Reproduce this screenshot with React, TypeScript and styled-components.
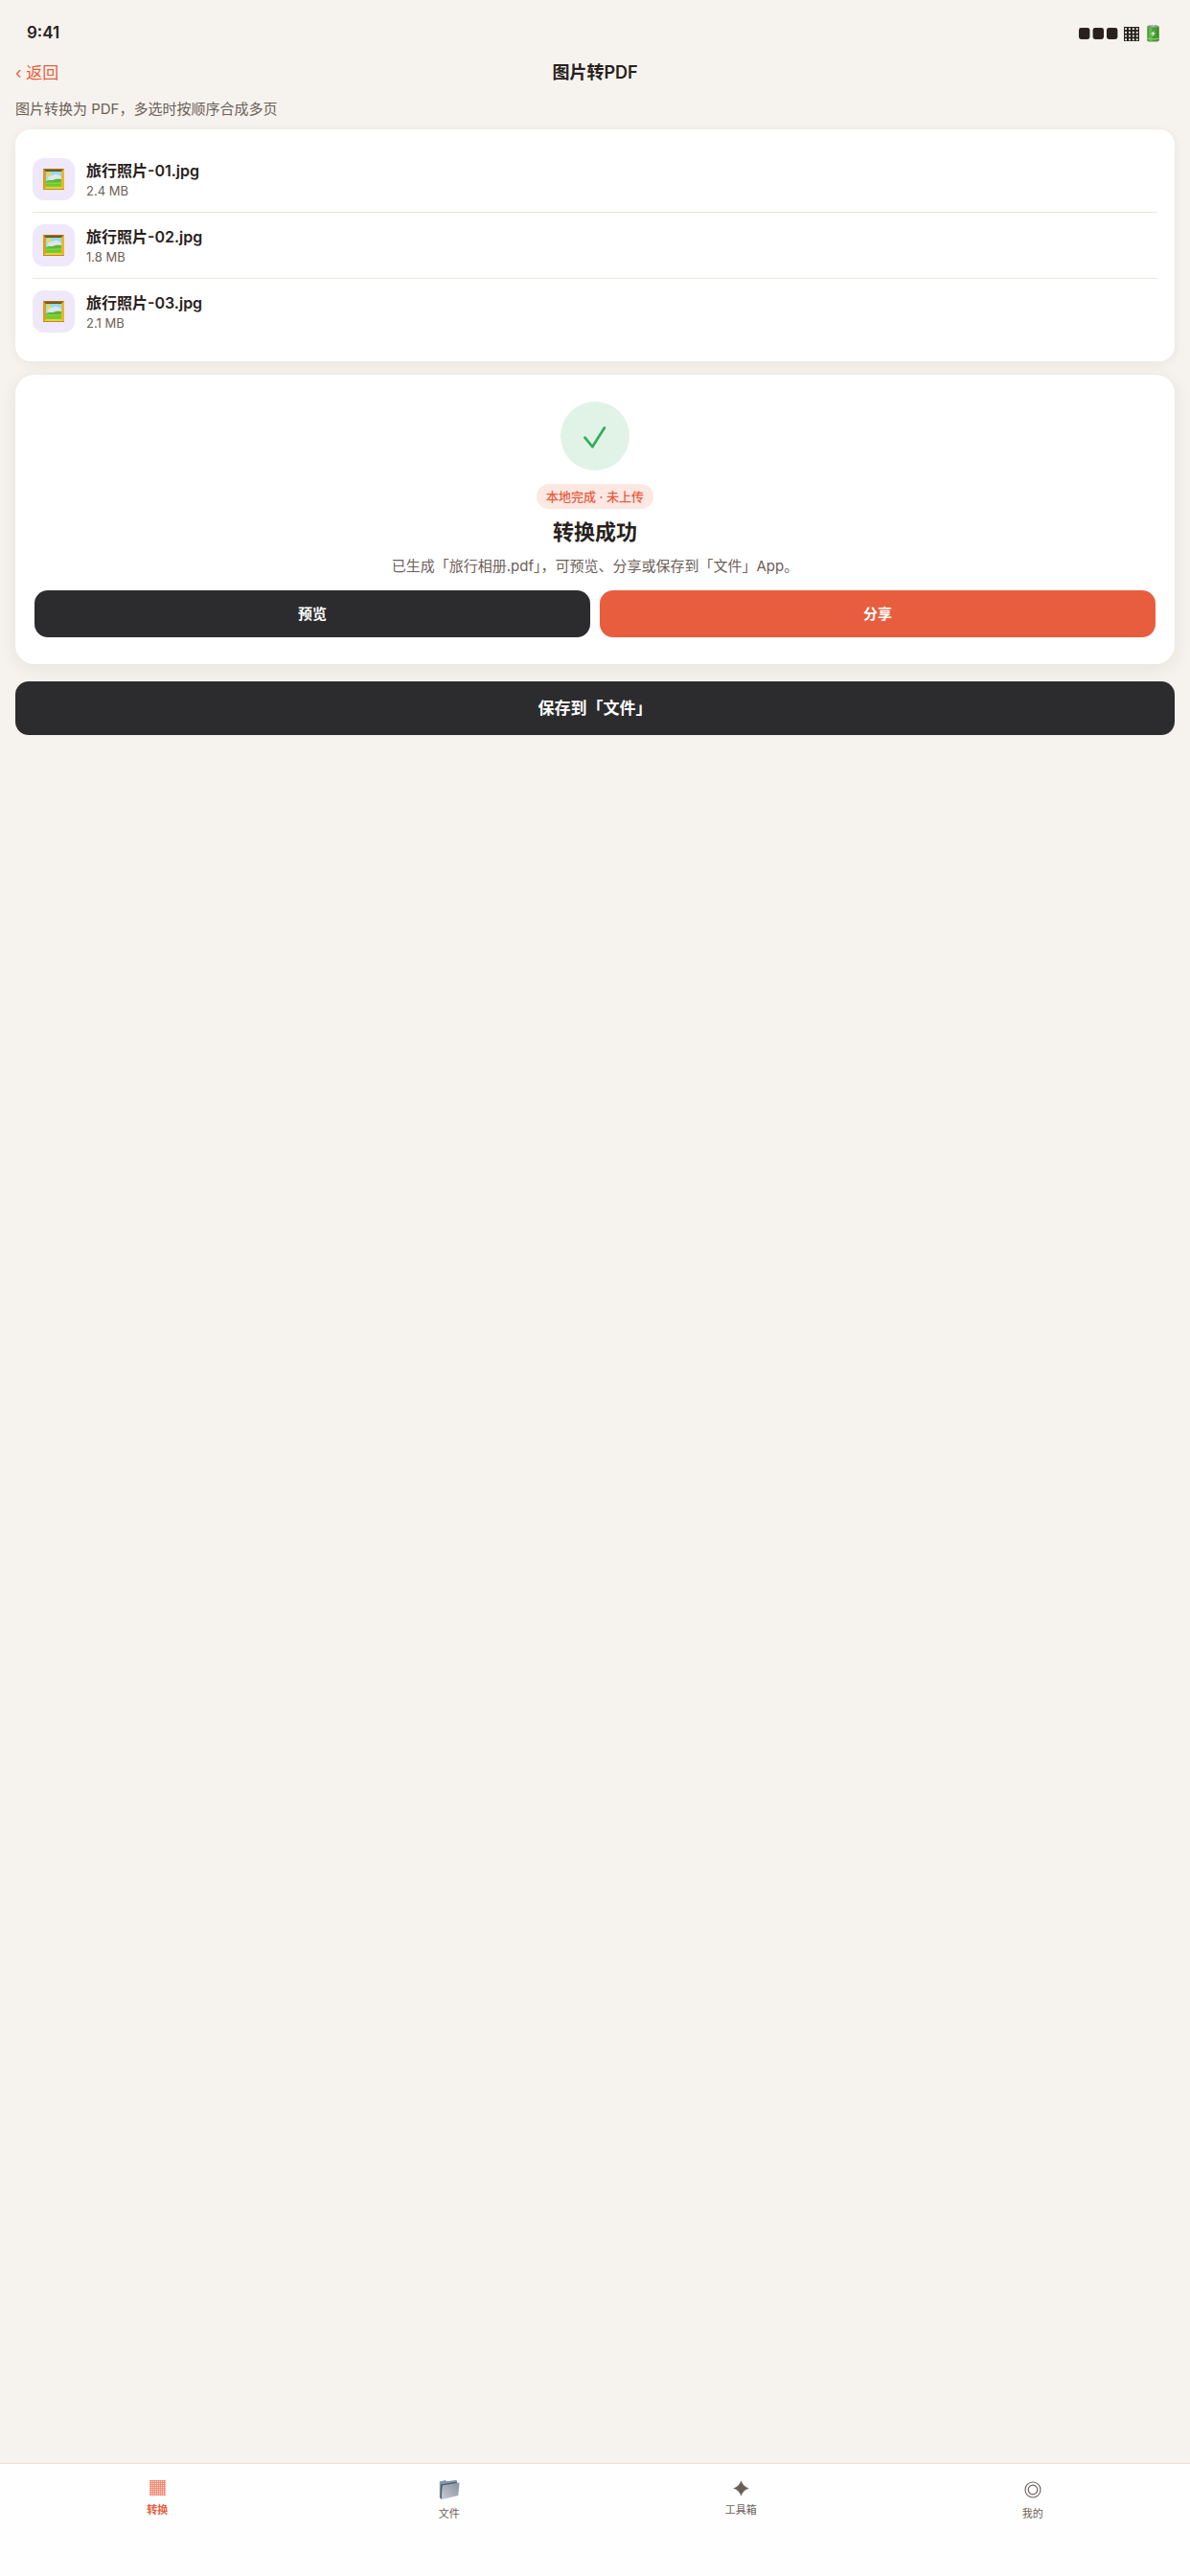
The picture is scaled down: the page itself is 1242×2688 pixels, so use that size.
import { useState } from "react";
import type { ReactNode } from "react";
import styled, { createGlobalStyle } from "styled-components";

const GlobalStyle = createGlobalStyle`
  * {
    box-sizing: border-box;
  }

  body {
    margin: 0;
    background: #f6f3ee;
    color: #28211c;
    font-family: Inter, "Noto Sans CJK SC", sans-serif;
  }

  button {
    font-family: inherit;
    cursor: pointer;
  }

  svg {
    display: block;
  }
`

const Screen = styled.div`
  display: flex;
  flex-direction: column;
  min-height: 100vh;
`

const StatusBar = styled.div`
  display: flex;
  justify-content: space-between;
  align-items: center;
  padding: 24px 28px 0;
  font-size: 17px;
  font-weight: 600;
  line-height: 20px;
`

const NavBar = styled.header`
  display: grid;
  grid-template-columns: 1fr auto 1fr;
  align-items: center;
  padding: 20px 16px 0;
  line-height: 24px;
`

const BackLink = styled.a`
  justify-self: start;
  color: #e85d3d;
  font-size: 17px;
  text-decoration: none;
`

const NavTitle = styled.h1`
  margin: 0;
  font-size: 18px;
  font-weight: 600;
`

const Content = styled.main`
  display: flex;
  flex-direction: column;
  padding: 14px 16px;
`

const Hint = styled.p`
  margin: 0 0 10px;
  color: #6b6058;
  font-size: 15px;
  line-height: 23px;
`

const FileCard = styled.ul`
  margin: 0 0 14px;
  padding: 18px;
  list-style: none;
  background: #ffffff;
  border-radius: 16px;
  box-shadow: 0 2px 12px rgba(40, 33, 28, 0.06);
`

const FileRow = styled.li`
  display: flex;
  align-items: center;
  gap: 12px;
  padding: 12px 0;

  & + & {
    border-top: 1px solid #ebe5dd;
  }
`

const FileIcon = styled.div`
  display: flex;
  align-items: center;
  justify-content: center;
  width: 44px;
  height: 44px;
  border-radius: 12px;
  background: #eee8fa;
`

const FileName = styled.div`
  font-size: 16px;
  font-weight: 600;
  line-height: 23px;
`

const FileSize = styled.div`
  color: #6b6058;
  font-size: 13px;
  line-height: 18px;
`

const ResultCard = styled.section`
  display: flex;
  flex-direction: column;
  align-items: center;
  margin-bottom: 18px;
  padding: 28px 20px;
  background: #ffffff;
  border-radius: 20px;
  box-shadow: 0 4px 20px rgba(40, 33, 28, 0.08);
`

const SuccessMark = styled.div`
  width: 72px;
  height: 72px;
  margin-bottom: 14px;
  border-radius: 50%;
  background: #e1f3e7;
`

const Badge = styled.span`
  padding: 0 10px;
  border-radius: 13px;
  background: #fce7e2;
  color: #e85d3d;
  font-size: 13px;
  font-weight: 500;
  line-height: 26px;
`

const ResultTitle = styled.h2`
  margin: 8px 0;
  font-size: 22px;
  font-weight: 600;
  line-height: 32px;
`

const ResultText = styled.p`
  margin: 0 0 14px;
  color: #6b6058;
  font-size: 15px;
  line-height: 23px;
`

const Actions = styled.div`
  display: flex;
  gap: 10px;
  width: 100%;
`

const Button = styled.button<{ $primary?: boolean; $large?: boolean }>`
  flex: 1;
  padding: ${({ $large }) => ($large ? 16 : 13)}px;
  border: none;
  border-radius: 14px;
  background: ${({ $primary }) => ($primary ? "#e85d3d" : "#2c2c2e")};
  color: #ffffff;
  font-size: ${({ $large }) => ($large ? 17 : 15)}px;
  font-weight: 600;
  line-height: ${({ $large }) => ($large ? 24 : 23)}px;
`

const TabBar = styled.nav`
  display: flex;
  height: 118px;
  margin-top: auto;
  padding: 17px 12px 0;
  border-top: 1px solid #e8dfd4;
  background: #fefefe;
`

const Tab = styled.button<{ $active: boolean }>`
  display: flex;
  flex: 1;
  flex-direction: column;
  align-items: center;
  gap: 6px;
  padding: 0;
  border: none;
  background: none;
  color: ${({ $active }) => ($active ? "#e85d3d" : "#6b6058")};
  font-size: 11px;
  font-weight: ${({ $active }) => ($active ? 600 : 400)};
  line-height: 16px;
`

const StatusIcons = () => (
  <svg width="88" height="20" viewBox="0 0 88 20" role="img" aria-label="信号与电量">
    <g fill="#28211c">
      <rect x="0" y="5" width="11.4" height="12" rx="2.4" />
      <rect x="14.6" y="5" width="11.4" height="12" rx="2.4" />
      <rect x="29" y="5" width="11.4" height="12" rx="2.4" />
      <rect x="47" y="4" width="16" height="15" />
    </g>
    <g fill="#f6f3ee">
      {[0, 1, 2, 3].map((row) =>
        [0, 1, 2, 3].map((col) => (
          <rect key={`${row}-${col}`} x={48.1 + col * 3.9} y={5.2 + row * 3.7} width="1.9" height="1.9" />
        ))
      )}
    </g>
    <path d="M71.300 3.800v14.600c0 1.600 12.200 1.600 12.200 0V3.800z" fill="#479b32" />
    <path d="M73 5v13.500c1 .4 2.200.5 3.500 .5V5z" fill="#62b94b" />
    <path d="M81.800 4.500v14l1.700-.6V4z" fill="#35861f" />
    <ellipse cx="77.400" cy="3.700" rx="6.100" ry="1.600" fill="#7d9a70" />
    <ellipse cx="77.400" cy="3.100" rx="2.600" ry="1" fill="#a9bad1" />
    <path d="M78.800 8l-4 3.600h2.300l-.9 2.800 4-3.800h-2.300z" fill="#d9f2cb" />
    <path d="M71.500 15.600c3 1 9 1 12 0v1.200c-3 1-9 1-12 0z" fill="#8ac878" />
  </svg>
)

const PictureIcon = () => (
  <svg width="22" height="22" viewBox="0 0 22 22" aria-hidden="true">
    <defs>
      <linearGradient id="sky" x1="0" y1="0" x2="0" y2="1">
        <stop offset="0" stopColor="#87d9ee" />
        <stop offset="1" stopColor="#d4eaf0" />
      </linearGradient>
      <linearGradient id="grass" x1="0" y1="0" x2="0" y2="1">
        <stop offset="0" stopColor="#58ad35" />
        <stop offset="1" stopColor="#73d52d" />
      </linearGradient>
    </defs>
    <rect width="22" height="22" rx="0.5" fill="#d99f21" />
    <path d="M0 0h22l-2.800 3H3z" fill="#a77516" />
    <path d="M1.500 1.200h19l-1.500 2H3z" fill="#76500f" />
    <path d="M22 0v22l-3-3V3z" fill="#edb52b" />
    <path d="M0 22l3-3h16l3 3z" fill="#f3cd32" />
    <path d="M0 21h22v1H0z" fill="#b98a1d" />
    <rect x="3" y="3" width="16" height="16" fill="url(#sky)" />
    <path d="M5 8.500c2-3 4-1 5-1 2-3 5-2 9 1V12H6z" fill="#dce6ee" />
    <circle cx="6" cy="6" r="2.200" fill="#f4d83b" />
    <path d="M3 13c4-2 6-.5 8-1.200 2-1.300 5-1.300 8-.8v8H3z" fill="url(#grass)" />
    <path d="M3 14.500c5-1 9 1 16-.5v1.600c-6 1-10-.6-16 .4z" fill="#9be052" opacity="0.6" />
  </svg>
)

const CheckIcon = () => (
  <svg width="72" height="72" viewBox="0 0 72 72" aria-hidden="true">
    <path
      d="M25.500 37.700L33.300 47.200L45.800 27.500"
      fill="none"
      stroke="#34ad5e"
      strokeWidth="2.800"
      strokeLinecap="round"
      strokeLinejoin="round"
    />
  </svg>
)

const ConvertIcon = () => (
  <svg width="17" height="17" viewBox="0 0 17 17" aria-hidden="true">
    <rect width="17" height="16" fill="#fad0c6" />
    <path
      d="M0 .5h17M0 2.500h17M0 4.500h17M0 6.500h17M0 8.500h17M0 10.500h17M0 13h17M0 15.500h17M1.500 0v16M3.500 0v16M5.500 0v16M7.500 0v16M9.500 0v16M11.500 0v16M13.500 0v16M15.500 0v16"
      stroke="#e85d3d"
      strokeWidth="0.700"
      opacity="0.7"
    />
  </svg>
)

const FolderIcon = () => (
  <svg width="22" height="21" viewBox="0 0 22 21" aria-hidden="true">
    <defs>
      <linearGradient id="folder" x1="0" y1="1" x2="1" y2="0">
        <stop offset="0" stopColor="#c8ced6" />
        <stop offset="0.500" stopColor="#a5adb8" />
        <stop offset="1" stopColor="#8893a2" />
      </linearGradient>
    </defs>
    <path d="M.8 1.500L6.800 0l1.700 1.200L18.500-.2l.6 3-15.500 3L2.500 19.500.8 18z" fill="#8597a8" />
    <path d="M2 4.500L19 1.500v2L4 6.500 3 20 1.500 19z" fill="#4d6172" />
    <path d="M3.800 5.600L21.500 2.500 20.300 16 2.800 20.300z" fill="url(#folder)" />
  </svg>
)

const ToolboxIcon = () => (
  <svg width="17" height="17" viewBox="0 0 17 17" aria-hidden="true">
    <path d="M8.500 .3C9.900 4.600 12.400 7.100 16.700 8.500 12.400 9.900 9.900 12.400 8.500 16.700 7.100 12.400 4.600 9.900 .3 8.500 4.600 7.100 7.100 4.600 8.500 .3z" fill="currentColor" />
  </svg>
)

const ProfileIcon = () => (
  <svg width="18" height="21" viewBox="0 0 18 21" aria-hidden="true">
    <g fill="none" stroke="currentColor">
      <circle cx="9" cy="10" r="8" strokeWidth="1.100" />
      <circle cx="9" cy="10" r="4.800" strokeWidth="1.200" />
    </g>
  </svg>
)

const files = [
  { name: "旅行照片-01.jpg", size: "2.4 MB" },
  { name: "旅行照片-02.jpg", size: "1.8 MB" },
  { name: "旅行照片-03.jpg", size: "2.1 MB" },
]

const tabs: { label: string; icon: ReactNode }[] = [
  { label: "转换", icon: <ConvertIcon /> },
  { label: "文件", icon: <FolderIcon /> },
  { label: "工具箱", icon: <ToolboxIcon /> },
  { label: "我的", icon: <ProfileIcon /> },
]

const App = () => {
  const [activeTab, setActiveTab] = useState("转换")

  return (
    <Screen lang="zh-CN">
      <GlobalStyle />
      <StatusBar>
        <span>9:41</span>
        <StatusIcons />
      </StatusBar>
      <NavBar>
        <BackLink href="#">‹ 返回</BackLink>
        <NavTitle>图片转PDF</NavTitle>
      </NavBar>
      <Content>
        <Hint>图片转换为 PDF，多选时按顺序合成多页</Hint>
        <FileCard>
          {files.map((file) => (
            <FileRow key={file.name}>
              <FileIcon>
                <PictureIcon />
              </FileIcon>
              <div>
                <FileName>{file.name}</FileName>
                <FileSize>{file.size}</FileSize>
              </div>
            </FileRow>
          ))}
        </FileCard>
        <ResultCard>
          <SuccessMark>
            <CheckIcon />
          </SuccessMark>
          <Badge>本地完成 · 未上传</Badge>
          <ResultTitle>转换成功</ResultTitle>
          <ResultText>已生成「旅行相册.pdf」，可预览、分享或保存到「文件」App。</ResultText>
          <Actions>
            <Button>预览</Button>
            <Button $primary>分享</Button>
          </Actions>
        </ResultCard>
        <Button $large>保存到「文件」</Button>
      </Content>
      <TabBar>
        {tabs.map((tab) => (
          <Tab
            key={tab.label}
            $active={tab.label === activeTab}
            onClick={() => setActiveTab(tab.label)}
          >
            {tab.icon}
            {tab.label}
          </Tab>
        ))}
      </TabBar>
    </Screen>
  )
}

export default App
